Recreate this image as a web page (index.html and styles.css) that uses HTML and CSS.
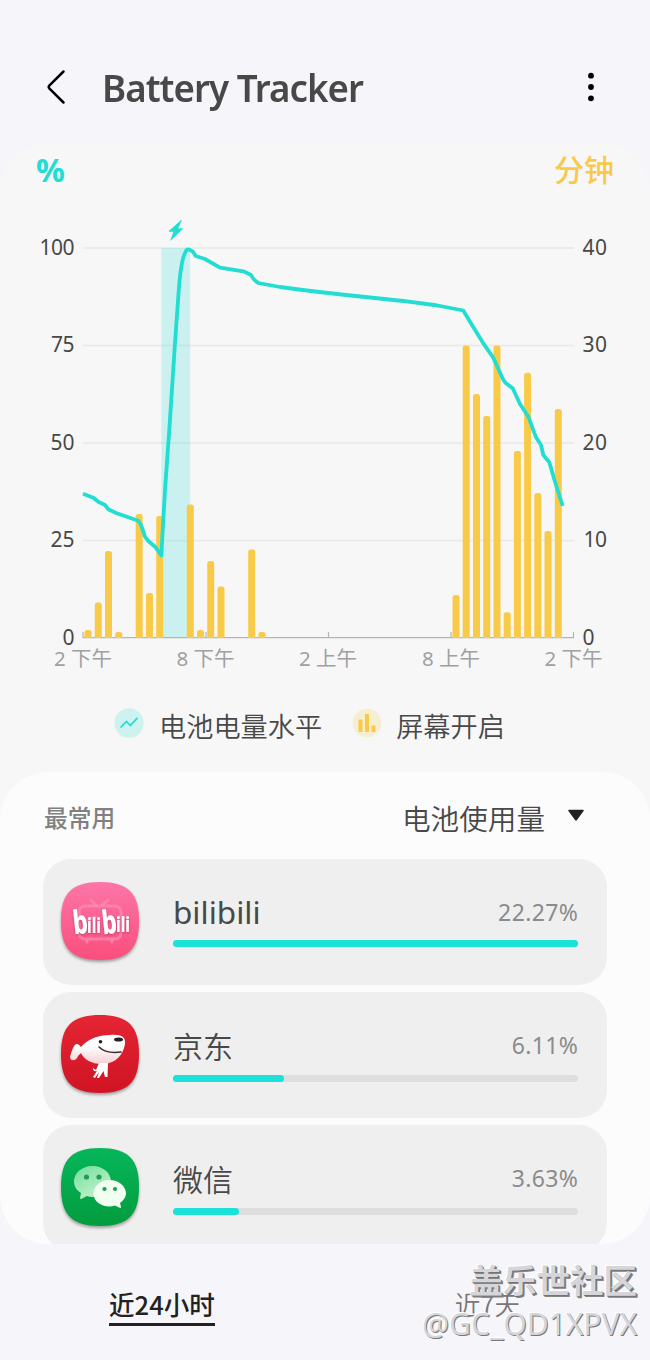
FILE: index.html
```html
<!DOCTYPE html>
<html lang="zh-CN">
<head>
<meta charset="utf-8">
<title>Battery Tracker</title>
<link rel="stylesheet" href="styles.css">
</head>
<body>
<div class="app">
  <header class="header">
    <svg class="back" width="20" height="36" viewBox="0 0 20 36"><path d="M17.5 2.5L3.500 16.300q-1.700 1.700 0 3.400L17.5 33.500" fill="none" stroke="#000" stroke-width="2.5" stroke-linecap="round"/></svg>
    <h1 class="title">Battery Tracker</h1>
    <svg class="more" width="8" height="30" viewBox="0 0 8 30"><circle cx="4" cy="3.700" r="2.900"/><circle cx="4" cy="15" r="2.900"/><circle cx="4" cy="26.300" r="2.900"/></svg>
  </header>

  <main class="content">
    <section class="tracker">
      <div class="units"><span class="unit-percent">%</span><span class="unit-minutes">分钟</span></div>
      <svg class="chart" width="650" height="472" viewBox="0 212 650 472">
        <g stroke="#e8e8e8" stroke-width="1.4">
          <path d="M83 248H574M83 345.5H574M83 443H574M83 540.5H574"/>
        </g>
        <rect x="161.3" y="248" width="28.8" height="390" fill="#1bded3" opacity=".2"/>
        <path d="M83 632V637.7H573.5V632M206 632V637M328.5 632V637M451 632V637" fill="none" stroke="#b5b5b5" stroke-width="1.2"/>
        <g class="bars" fill="#f9ca48">
          <path d="M84.5 638v-5.500q0-2.500 2.500-2.500h2q2.500 0 2.500 2.500v5.500z"/>
          <path d="M94.8 638V605q0-2.500 2.500-2.500h2q2.500 0 2.500 2.500V638z"/>
          <path d="M105 638V553.500q0-2.500 2.500-2.500h2q2.500 0 2.500 2.500V638z"/>
          <path d="M115.200 638V634.500q0-2.500 2.500-2.500h2q2.500 0 2.500 2.500V638z"/>
          <path d="M135.700 638V516.500q0-2.500 2.500-2.500h2q2.500 0 2.500 2.500V638z"/>
          <path d="M146 638V595.500q0-2.500 2.500-2.500h2q2.500 0 2.500 2.500V638z"/>
          <path d="M156.200 638V518.500q0-2.500 2.500-2.500h2q2.500 0 2.500 2.500V638z"/>
          <path d="M186.800 638V507q0-2.500 2.500-2.500h2q2.500 0 2.500 2.500V638z"/>
          <path d="M197 638V632.500q0-2.500 2.500-2.500h2q2.500 0 2.500 2.500V638z"/>
          <path d="M207.200 638V563.500q0-2.500 2.500-2.500h2q2.500 0 2.500 2.500V638z"/>
          <path d="M217.500 638V589q0-2.500 2.500-2.500h2q2.500 0 2.500 2.500V638z"/>
          <path d="M248.200 638V552q0-2.500 2.500-2.500h2q2.500 0 2.500 2.500V638z"/>
          <path d="M258.500 638V634.500q0-2.500 2.500-2.500h2q2.500 0 2.500 2.500V638z"/>
          <path d="M452.500 638V597.500q0-2.500 2.500-2.500h2q2.500 0 2.500 2.500V638z"/>
          <path d="M462.700 638V348q0-2.500 2.500-2.500h2q2.500 0 2.500 2.500V638z"/>
          <path d="M473 638V396.500q0-2.500 2.500-2.500h2q2.500 0 2.500 2.500V638z"/>
          <path d="M483.200 638V418.500q0-2.500 2.500-2.500h2q2.500 0 2.500 2.500V638z"/>
          <path d="M493.500 638V348q0-2.500 2.500-2.500h2q2.500 0 2.500 2.500V638z"/>
          <path d="M503.700 638V614.800q0-2.500 2.500-2.500h2q2.500 0 2.500 2.500V638z"/>
          <path d="M513.900 638V453.500q0-2.500 2.500-2.500h2q2.500 0 2.500 2.500V638z"/>
          <path d="M524.100 638V375.200q0-2.500 2.500-2.500h2q2.500 0 2.500 2.500V638z"/>
          <path d="M534.300 638V495.500q0-2.500 2.500-2.500h2q2.500 0 2.500 2.500V638z"/>
          <path d="M544.500 638V533.500q0-2.500 2.500-2.500h2q2.500 0 2.500 2.500V638z"/>
          <path d="M554.800 638V411.500q0-2.500 2.500-2.500h2q2.500 0 2.500 2.500V638z"/>
        </g>
        <path d="M83 493.700L93.300 497.700 98.300 501.700 105 505 108.300 509.300 116.700 513.300 138.300 520.700Q141 524 142.500 529T145 536.700L148.300 541 155 546.700 161.300 555.500 165 490 169.300 430 175 343 178.300 296.700Q180.500 262 185 253Q187 248 190 250L193 251.700 195.700 256 205 259 220 267.700 243.300 271.300 250.700 274.700Q254 281 258.300 283L280 287Q320 292.500 370 297.500T440 306L463.300 310.500 470 321.700 483.300 343.300 493.300 357.700 502 377Q504 382 507 384L512.700 388.300 520 404 528.300 416.700 536 437.300 541 445 543.300 455 549.300 462.300 555 481.700 562.700 506" fill="none" stroke="#22ddd2" stroke-width="3.800" stroke-linejoin="round"/>
        <path d="M181.300 220.300L169 231.300H174L170.700 240.200 182.600 228.800H177.600z" fill="#22ddd2" stroke="#22ddd2" stroke-width=".8"/>
        <g class="axis" text-anchor="end">
          <text x="74.500" y="254.500" textLength="35">100</text><text x="74.500" y="352" textLength="23.500">75</text><text x="74.500" y="449.500" textLength="24">50</text><text x="74.500" y="547" textLength="24">25</text><text x="74.500" y="644.500">0</text>
        </g>
        <g class="axis">
          <text x="582.500" y="254.500" textLength="24.500">40</text><text x="582.500" y="352" textLength="24.500">30</text><text x="582.500" y="449.500" textLength="24.500">20</text><text x="583.500" y="547" textLength="23.500">10</text><text x="582.500" y="644.500">0</text>
        </g>
        <g class="times" text-anchor="middle">
          <text x="83" y="665.500">2 下午</text><text x="205.500" y="665.500">8 下午</text><text x="328" y="665.500">2 上午</text><text x="451" y="665.500">8 上午</text><text x="573.500" y="665.500">2 下午</text>
        </g>
      </svg>
      <div class="legend">
        <svg width="30" height="30" viewBox="0 0 30 30"><circle cx="15" cy="15" r="14.700" fill="#cdf2ef"/><path d="M6.500 19.500L12.500 13.500 16.300 17.500 23.500 9.800" fill="none" stroke="#22ddd2" stroke-width="1.700"/></svg>
        <span class="legend-level">电池电量水平</span>
        <svg width="30" height="30" viewBox="0 0 30 30"><circle cx="15" cy="15" r="14.300" fill="#f7edcf"/><path d="M8.500 24V11.500M15 24V6M21.500 24V17.500" stroke="#f9ca48" stroke-width="4"/></svg>
        <span class="legend-screen">屏幕开启</span>
      </div>
    </section>

    <section class="usage">
      <div class="usage-head">
        <h2 class="most-used">最常用</h2>
        <div class="sort">电池使用量<svg width="18" height="13" viewBox="0 0 18 13"><path d="M2 1.500H16L9 11z" fill="#222" stroke="#222" stroke-width="1.500" stroke-linejoin="round"/></svg></div>
      </div>
      <div class="apps">
        <article class="app-row app-row-first">
          <svg class="icon" width="78" height="78" viewBox="0 0 78 78">
            <defs><linearGradient id="pink" x2="0" y2="1"><stop stop-color="#fc75a8"/><stop offset="1" stop-color="#fa4e7d"/></linearGradient></defs>
            <path d="M39 0C67 0 78 11 78 39S67 78 39 78 0 67 0 39 11 0 39 0z" fill="url(#pink)"/>
            <g fill="none" stroke="#ff8fb4" stroke-opacity=".65" stroke-width="3" stroke-linecap="round"><rect x="18" y="24" width="42" height="33" rx="6"/><path d="M30 18l5 5M47 18l-6 5M26 59v1M51 59v1M34 35l-7 3M44 35l7 3"/></g>
            <g class="bili-logo">
              <text x="12" y="52" font-size="33" textLength="15" lengthAdjust="spacingAndGlyphs" transform="rotate(-6 18 43)">b</text>
              <text x="26" y="51" font-size="22" textLength="14" lengthAdjust="spacingAndGlyphs">ili</text>
              <text x="41" y="52" font-size="33" textLength="15" lengthAdjust="spacingAndGlyphs" transform="rotate(-6 47 43)">b</text>
              <text x="55" y="50" font-size="22" textLength="14" lengthAdjust="spacingAndGlyphs">ili</text>
            </g>
          </svg>
          <div class="info"><div class="line"><span class="name name-latin">bilibili</span><span class="value">22.27%</span></div><div class="track"><div class="fill" style="width:100%"></div></div></div>
        </article>
        <article class="app-row">
          <svg class="icon" width="78" height="78" viewBox="0 0 78 78">
            <defs><linearGradient id="red" x2="0" y2="1"><stop stop-color="#e42533"/><stop offset="1" stop-color="#d01424"/></linearGradient><linearGradient id="dog" x2="0" y2="1"><stop offset=".4" stop-color="#fff"/><stop offset="1" stop-color="#f8cdd2"/></linearGradient></defs>
            <path d="M39 0C67 0 78 11 78 39S67 78 39 78 0 67 0 39 11 0 39 0z" fill="url(#red)"/>
            <path d="M20 32C27 24 37 20 49 20C60 19 65 22 64 29C62 40 55 48 43 49C32 50 22 44 20 38L17 41C15 47 9 46 9 42C11 35 13 29 16 29Q18 29 20 32z" fill="url(#dog)"/>
            <path d="M38 48H47L46.500 62L44 62 42.500 56 38 63H36L38 57 34 63 32 62 36 56Q32 57 32 53L35 55z" fill="#fff"/>
            <circle cx="39.500" cy="26.700" r="1.800" fill="#222"/><ellipse cx="57.500" cy="24.500" rx="4.500" ry="2" fill="#222"/><path d="M38 32Q45 39 60 37" fill="none" stroke="#333" stroke-width="1.600" stroke-linecap="round"/>
          </svg>
          <div class="info"><div class="line"><span class="name">京东</span><span class="value">6.11%</span></div><div class="track"><div class="fill" style="width:27.400%"></div></div></div>
        </article>
        <article class="app-row">
          <svg class="icon" width="78" height="78" viewBox="0 0 78 78">
            <defs><linearGradient id="green" x2="0" y2="1"><stop stop-color="#06b65a"/><stop offset="1" stop-color="#029c3e"/></linearGradient><linearGradient id="bubble" x1=".2" x2=".8" y2="1"><stop stop-color="#79e0a2"/><stop offset="1" stop-color="#c9f3ce"/></linearGradient></defs>
            <path d="M39 0C67 0 78 11 78 39S67 78 39 78 0 67 0 39 11 0 39 0z" fill="url(#green)"/>
            <path d="M31.500 18C42 18 50 25 50 33.500S42 49 31.500 49Q28.500 49 26 48L20 51Q19 51 19 50L20 45C15 42 13 38 13 33.500C13 25 21 18 31.500 18z" fill="url(#bubble)"/>
            <path d="M48.500 32C57.500 32 65 38 65 45.500Q65 50.500 59 55L60 59Q60 60.500 58 59.500L54 57.500Q51.500 58.500 48.500 58.500C39.500 58.500 32.500 53 32.500 45.500S39.500 32 48.500 32z" fill="#f0ffef"/>
            <g fill="#269b55"><circle cx="25.500" cy="29" r="2.600"/><circle cx="38" cy="29" r="2.600"/><circle cx="43.500" cy="41" r="2.100"/><circle cx="54" cy="41" r="2.100"/></g>
          </svg>
          <div class="info"><div class="line"><span class="name">微信</span><span class="value">3.63%</span></div><div class="track"><div class="fill" style="width:16.200%"></div></div></div>
        </article>
      </div>
    </section>
  </main>

  <nav class="tabs">
    <span class="tab tab-active">近24小时</span>
    <span class="tab">近7天</span>
  </nav>
  <div class="community"><strong>盖乐世社区</strong><span>@GC_QD1XPVX</span></div>
</div>
</body>
</html>
```

FILE: styles.css
```css
* { box-sizing: border-box; }
body { margin: 0; background: #f6f6fa; font-family: "Noto Sans", "Noto Sans CJK SC", sans-serif; color: #484848; }
.app { position: relative; width: 650px; height: 1360px; overflow: hidden; display: flex; flex-direction: column; }
.header { height: 144px; flex: none; display: flex; align-items: center; padding: 30px 55px 0 46px; }
.back { flex: none; }
.title { margin: 0 0 0 36px; font-size: 38.500px; line-height: 52px; font-weight: 600; letter-spacing: -1px; white-space: nowrap; transform: scaleX(.952); transform-origin: left; }
.more { margin-left: auto; }
.content { height: 1100px; flex: none; overflow: hidden; border-radius: 48px; background: #f7f7f7; }
.tracker { height: 628px; }
.units { height: 68px; padding: 5px 36px 0 36px; display: flex; justify-content: space-between; line-height: 42px; }
.unit-percent { color: #22ddd2; font-size: 32px; font-weight: 700; }
.unit-minutes { color: #f9ca48; font-size: 30px; font-weight: 500; line-height: 38px; font-family: "Noto Sans CJK SC", sans-serif; }
.chart { display: block; }
.axis { font-size: 21px; fill: #484848; }
.times { font-size: 20.500px; fill: #a0a0a0; font-weight: 400; }
.legend { display: flex; align-items: center; height: 54px; margin-top: 12px; padding: 0 0 0 114px; font-family: "Noto Sans CJK SC", sans-serif; font-weight: 350; font-size: 27.200px; line-height: 40px; }
.legend svg { flex: none; }
.legend span { padding-top: 3px; }
.legend-level { margin: 0 30px 0 15px; white-space: nowrap; }
.legend-screen { margin-left: 14px; white-space: nowrap; }
.usage { height: 472px; border-radius: 48px; overflow: hidden; background: #fcfcfc; padding: 0 43px; }
.usage-head { height: 87px; display: flex; justify-content: space-between; align-items: center; padding: 3px 22px 0 1px; font-family: "Noto Sans CJK SC", sans-serif; }
.most-used { margin: 0; font-size: 23.700px; font-weight: 500; color: #808080; }
.sort { display: flex; align-items: center; gap: 22px; font-size: 28.600px; font-weight: 350; }
.sort svg { margin-bottom: 4px; }
.apps { display: flex; flex-direction: column; gap: 7px; }
.app-row { height: 126px; flex: none; border-radius: 28px; background: #efefef; padding: 23px 29px 0 18px; display: flex; gap: 35px; }
.icon { flex: none; overflow: visible; filter: drop-shadow(0 2px 1.500px rgb(0 0 0 / .35)); }
.bili-logo { fill: #fff; font-family: "Noto Sans", sans-serif; font-weight: 800; filter: drop-shadow(0 1px 1px rgb(150 20 70 / .5)); }
.info { flex: 1; margin-left: -1px; padding-top: 8px; }
.line { height: 52px; display: flex; justify-content: space-between; line-height: 44px; }
.app-row-first .line { height: 50px; }
.name { font-family: "Noto Sans CJK SC", sans-serif; font-size: 30px; font-weight: 350; }
.name-latin { font-family: "Noto Sans", sans-serif; font-size: 31.500px; font-weight: 400; }
.value { font-size: 23px; letter-spacing: .4px; margin-right: -.4px; color: #8b8b8b; }
.track { height: 7px; border-radius: 4px; background: #dedede; }
.fill { height: 7px; border-radius: 4px; background: #1be1d9; }
.tabs { flex: 1; display: flex; align-items: flex-start; padding: 42px 130px 0 109px; justify-content: space-between; font-family: "Noto Sans CJK SC", sans-serif; font-size: 25.600px; line-height: 36px; }
.tab { font-weight: 350; color: #777; white-space: nowrap; }
.tab-active { font-weight: 500; color: #222; border-bottom: 3px solid #222; height: 40px; }
.community { position: absolute; right: 13px; top: 1255px; display: flex; flex-direction: column; align-items: flex-end; white-space: nowrap; font-family: "Noto Sans CJK SC", sans-serif; color: #d6d6da; text-shadow: 1px 1px 0 #747474, 2px 2px 0 #858585, -1px -1px 0 #fff; }
.community strong { font-size: 33.500px; line-height: 48px; font-weight: 700; }
.community span { font-family: "Noto Sans", sans-serif; font-size: 30px; line-height: 42px; text-shadow: 1px 1px 0 #777, -1px -1px 0 #fff; }
```
